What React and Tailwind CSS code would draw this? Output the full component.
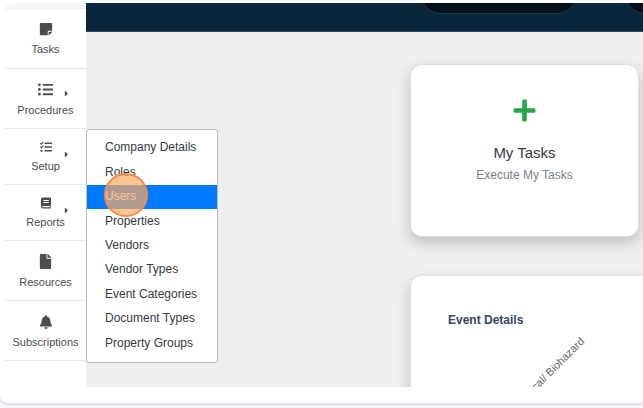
import React from "react";
import {
  FaBell,
  FaCaretRight,
  FaFile,
  FaListUl,
  FaPlus,
  FaStickyNote,
  FaTasks,
} from "react-icons/fa";

function BookIcon({ size }) {
  return (
    <svg width={size} height={size} viewBox="0 0 12 12" fill="currentColor" aria-hidden="true">
      <path
        fillRule="evenodd"
        d="M2.6 0.5H10.4Q11 0.5 11 1.1V8.2Q11 8.6 10.6 8.8V10.4Q11 10.5 11 11Q11 11.5 10.5 11.5H2.8Q1 11.5 1 9.7V2.2Q1 0.5 2.6 0.5ZM3.4 3V4H8.8V3ZM3.4 5V6H8.8V5ZM2.8 8.9Q2.2 8.9 2.2 9.6Q2.2 10.3 2.8 10.3H9.6V8.9Z"
      />
    </svg>
  );
}

const navItems = [
  { label: "Tasks", Icon: FaStickyNote, size: 14, box: "h-[60px]" },
  { label: "Procedures", Icon: FaListUl, size: 15, box: "h-[60px] pt-0.5", caret: "mt-2" },
  { label: "Setup", Icon: FaTasks, size: 12, box: "h-[56px] pb-0.5", caret: "mt-3.5" },
  { label: "Reports", Icon: BookIcon, size: 12, box: "h-[56px] pb-0.5", caret: "mt-3.5" },
  { label: "Resources", Icon: FaFile, size: 15, box: "h-[60px] pt-0.5" },
  { label: "Subscriptions", Icon: FaBell, size: 14, box: "h-[60px] pt-0.5" },
];

const setupLinks = [
  "Company Details",
  "Roles",
  "Users",
  "Properties",
  "Vendors",
  "Vendor Types",
  "Event Categories",
  "Document Types",
  "Property Groups",
];

function NavItem({ label, Icon, size, box, caret }) {
  return (
    <a
      href="#"
      className={`${box} flex flex-col items-center justify-center border-b border-[#e8e8e8] text-[#4d4d4d]`}
    >
      <span className="grid h-5 w-full grid-cols-[1fr_16px_1fr] items-center justify-items-center">
        <span />
        <Icon size={size} />
        {caret && <FaCaretRight size={9} className={`${caret} ml-2 justify-self-start`} />}
      </span>
      <span className="text-[11px] leading-5 whitespace-nowrap">{label}</span>
    </a>
  );
}

function SetupMenu() {
  return (
    <div className="absolute top-[126px] left-[81px] z-10 flex h-[234px] w-[132px] flex-col rounded-[3px] border border-[#bdbdbd] bg-white py-1.5">
      {setupLinks.map((name) => {
        const active = name === "Users";
        return (
          <a
            key={name}
            href="#"
            className={`relative flex flex-1 items-center pb-0.5 pl-[18px] text-xs whitespace-nowrap ${
              active ? "z-10 bg-[#007bff] text-white" : "text-[#343a40]"
            }`}
          >
            {name}
            {active && (
              <span className="absolute -top-3 left-[17px] size-11 rounded-full border-2 border-[#f28a48] bg-[#fcaa62]/70" />
            )}
          </a>
        );
      })}
    </div>
  );
}

export default function App() {
  return (
    <div className="min-h-screen overflow-hidden bg-[#f8f9fd] font-['Liberation_Sans',Arial,sans-serif]">
      <div className="rounded-bl-lg border-b border-[#e2e3ea] bg-white pt-[3px] pb-4 pl-[5px] shadow-sm">
        <div className="relative flex h-[384px] overflow-hidden rounded-l-lg">
          <nav className="w-[81px] shrink-0 bg-white">
            <div className="h-[6px] border-b border-[#efefef] bg-[#f7f7f7]" />
            {navItems.map((item) => (
              <NavItem key={item.label} {...item} />
            ))}
          </nav>

          <SetupMenu />

          <div className="flex min-w-0 flex-1 flex-col overflow-hidden bg-[#efefef]">
            <header className="flex h-[29px] shrink-0 items-start gap-[46px] overflow-hidden border-b border-[#2b4a5c] bg-[#0a263b] pl-[334px]">
              <div className="-mt-8 h-[43px] w-[158px] shrink-0 rounded-full border border-[#20394a] bg-[#04101a]" />
              <div className="-mt-8 h-[43px] w-[158px] shrink-0 rounded-full border border-[#20394a] bg-[#04101a]" />
            </header>

            <main className="flex flex-col gap-[38px] pt-8 pl-[324px]">
              <section className="flex h-[173px] w-[229px] shrink-0 flex-col items-center rounded-xl border border-[#dedede] bg-white pt-[33px] shadow-[0_6px_14px_rgba(0,0,0,0.2)]">
                <FaPlus size={25} className="text-[#28a745]" />
                <h2 className="mt-[18px] text-[15px] leading-6 text-[#343a40]">My Tasks</h2>
                <p className="text-xs leading-5 text-[#7a828a]">Execute My Tasks</p>
              </section>

              <section className="h-[220px] w-full shrink-0 rounded-tl-xl border border-r-0 border-[#e2e2e2] bg-white pt-[34px] pl-[37px] shadow-[0_6px_14px_rgba(0,0,0,0.2)]">
                <h2 className="text-xs leading-5 font-bold text-[#33475b]">Event Details</h2>
                <svg
                  width="190"
                  height="120"
                  role="img"
                  aria-label="Event chart"
                  className="overflow-visible"
                >
                  <text
                    x="137"
                    y="12"
                    textAnchor="end"
                    transform="rotate(-45 137 12)"
                    fontSize="11"
                    fill="#666"
                  >
                    Medical/ Biohazard
                  </text>
                </svg>
              </section>
            </main>
          </div>
        </div>
      </div>
    </div>
  );
}
